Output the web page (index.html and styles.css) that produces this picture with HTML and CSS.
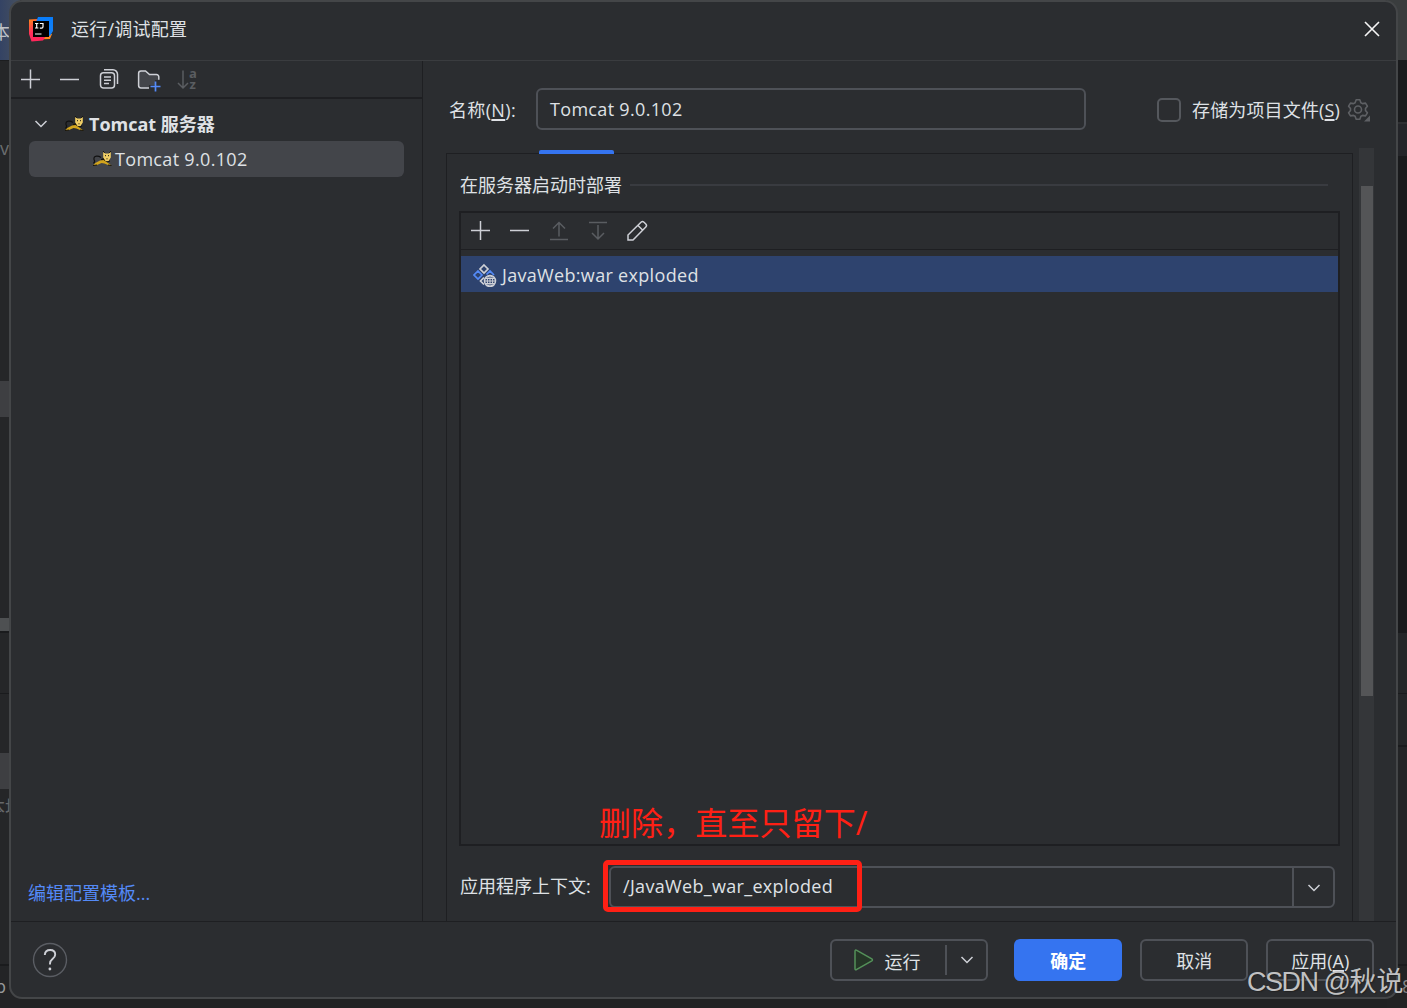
FILE: index.html
```html
<!DOCTYPE html>
<html lang="zh-CN">
<head>
<meta charset="utf-8">
<title>运行/调试配置</title>
<link rel="stylesheet" href="styles.css">
</head>
<body>
<div class="ide ide-left">
  <div class="seg l1">本</div><div class="seg l2">v</div><div class="seg l3"></div><div class="seg l4"></div><div class="seg l5"></div><div class="seg l6"></div><div class="seg l6b"></div><div class="seg l7"></div><div class="seg l8">本地</div><div class="seg l9">p</div>
</div>
<div class="ide ide-right">
  <div class="seg r1"></div><div class="seg r2"></div><div class="seg r3"></div><div class="seg r4"></div><div class="seg r5"></div><div class="seg r6"></div><div class="seg r7"></div><div class="seg r8">8</div>
</div>
<main class="dialog">
  <header class="titlebar">
    <svg class="logo" width="26" height="26" viewBox="0 0 26 26">
      <defs>
        <linearGradient id="g1" x1="0" y1="0" x2=".5" y2="1"><stop offset="0" stop-color="#ff8a18"/><stop offset=".55" stop-color="#ff2d5b"/><stop offset="1" stop-color="#ff2459"/></linearGradient>
        <linearGradient id="g2" x1="0" y1="0" x2="0" y2="1"><stop offset="0" stop-color="#087cfa"/><stop offset="1" stop-color="#1682f5"/></linearGradient>
      </defs>
      <path d="M15 18h9l-2 5-7 .2z" fill="#ff8618"/>
      <path d="M1 3.500 10 3v17h8l-3 4.500-11.500 1L1 18z" fill="url(#g1)"/>
      <path d="M10 1h15v14l-3 5-5-1V6H8z" fill="url(#g2)"/>
      <rect x="5" y="5" width="16" height="16" fill="#000"/>
      <path d="M7 7.500h3.400M8.700 7.500v4.500M7 12h3.400M11.800 7.500H15v3.300q0 1.300-1.300 1.300h-1.900M7 18h6.500" fill="none" stroke="#fff" stroke-width="1.200"/>
    </svg>
    <h1>运行/调试配置</h1>
    <svg class="close" width="18" height="18" viewBox="0 0 18 18"><path d="M2 2l14 14M16 2L2 16" stroke="#f5f5f5" stroke-width="1.600"/></svg>
  </header>
  <div class="content">
    <aside>
      <div class="toolbar">
        <svg width="24" height="24" viewBox="0 0 24 24"><path d="M12.500 2.500v19M3 12.500h19" class="ic"/></svg>
        <svg width="24" height="24" viewBox="0 0 24 24"><path d="M3 12.500h19" class="ic"/></svg>
        <svg width="24" height="24" viewBox="0 0 24 24"><path d="M7 2.800h9a4.500 4.500 0 0 1 4.500 4.500V17M6.500 5.700h8a3 3 0 0 1 3 3v9.300a3 3 0 0 1-3 3h-8a3 3 0 0 1-3-3V8.700a3 3 0 0 1 3-3zM7 10h7M7 13.300h7M7 16.500h5" class="ic"/></svg>
        <svg width="25" height="24" viewBox="0 0 25 24"><path d="M13 21H5a2.400 2.400 0 0 1-2.400-2.400V6.400A2.400 2.400 0 0 1 5 4h4.500l4 3.500h7a2.300 2.300 0 0 1 2.300 2.300V13H19v5h-6z" fill="#43454a"/><path d="M13 21H5a2.400 2.400 0 0 1-2.400-2.400V6.400A2.400 2.400 0 0 1 5 4h4.500l4 3.500h7a2.300 2.300 0 0 1 2.300 2.300v3" class="ic"/><path d="M19.500 14.500v10M14.500 19.500h10" stroke="#548af7" stroke-width="1.700"/></svg>
        <svg width="24" height="24" viewBox="0 0 24 24"><path d="M7 3.500V21M2 16l5 5 5-5" class="ic off"/><text x="13" y="11" class="az">a</text><text x="13.500" y="22" class="az">z</text></svg>
      </div>
      <div class="tree">
        <div class="node parent">
          <svg width="14" height="10" viewBox="0 0 14 10"><path d="M1.500 2l5.500 5.500L12.500 2" class="ic"/></svg>
          <svg class="cat" width="22" height="18" viewBox="0 0 22 18"><use href="#tomcat"/></svg>
          <b>Tomcat 服务器</b>
        </div>
        <div class="node child">
          <svg class="cat" width="22" height="18" viewBox="0 0 22 18"><g id="tomcat"><path d="M2.500 13.500Q4.500 11.500 3 9.500 Q2.500 6.500 5.500 6.200 Q8 6 10 7.500" fill="none" stroke="#111" stroke-width="1.200"/><path d="M10 9.500 13 8.500l3 2-2 1.500zM15 12.500l4-1.500" fill="#17140a" stroke="#17140a"/><path d="M2 15.500 Q5 12 9 10.500 L12.500 10 Q16 12 20.500 15.500 L17 15 Q13 13 10.500 13 L6 15z" fill="#d2a41c"/><path d="M2 15.500l4-.5M20.500 15.500l-3.500-.5" stroke="#17140a" stroke-width="1"/><path d="M12.200 1.500l2 2h3.600l2-2v6l-2.300 3.500h-3L12.200 7.500z" fill="#f0ce65"/><path d="M12 1l1.700 2M20 1l-1.700 2M14 5.700h1M17 5.700h1M15.500 8.800h1" stroke="#111" stroke-width="1"/></g></svg>
          <span class="latin">Tomcat 9.0.102</span>
        </div>
      </div>
      <a class="link">编辑配置模板...</a>
    </aside>
    <section class="editor">
      <div class="namerow">
        <label class="nl">名称(<u>N</u>):</label>
        <div class="field"><span class="latin">Tomcat 9.0.102</span></div>
        <i class="check"></i>
        <label class="store">存储为项目文件(<u>S</u>)</label>
        <svg class="gear" width="24" height="24" viewBox="0 0 24 24"><g fill="none" stroke="#5e6064" stroke-width="1.600"><circle cx="11" cy="11.500" r="3.500"/><path d="M9.200 1.800h3.600l1.100 2.900 1.600.9 3-.5 1.900 3.100-1.900 2.400v1.800l1.900 2.400-1.900 3.100-3-.5-1.600.9-1.100 2.900H9.200l-1.100-2.900-1.600-.9-3 .5-1.900-3.100 1.900-2.400v-1.800L1.600 8.200l1.900-3.100 3 .5 1.600-.9z" stroke-linejoin="round"/></g><path d="M23 17.500v6h-6z" fill="#5e6064"/></svg>
      </div>
      <div class="lower">
        <div class="panel">
          <i class="tabmark"></i>
          <div class="heading"><span>在服务器启动时部署</span><i></i></div>
          <div class="list">
            <div class="toolbar">
              <svg width="24" height="24" viewBox="0 0 24 24"><path d="M12.500 2v19M3 11.500h19" class="ic"/></svg>
              <svg width="24" height="24" viewBox="0 0 24 24"><path d="M3 11.500h19" class="ic"/></svg>
              <svg width="24" height="24" viewBox="0 0 24 24"><path d="M12 17.500V4M6 9.500l6-6 6 6M3 20.500h18" class="ic off"/></svg>
              <svg width="24" height="24" viewBox="0 0 24 24"><path d="M12 6V19.500M6 14l6 6 6-6M3 3.500h18" class="ic off"/></svg>
              <svg width="24" height="24" viewBox="0 0 24 24"><path d="M3 21v-5L16 3.200q1.500-1.500 3 0l1.800 1.800q1.500 1.500 0 3L8 21zM13 6.500l4.800 4.800" class="ic"/></svg>
            </div>
            <div class="item">
              <svg width="24" height="24" viewBox="0 0 24 24" fill="none" stroke-width="1.700"><path d="M11 2l4 4-4 4-4-4z" stroke="#ced0d6"/><path d="M5 8l4 4-4 4-4-4zM13.500 11.500l3.500-3.500 4 4" stroke="#548af7"/><path d="M11 14.500l-3.500 3.500 3.500 3.500" stroke="#ced0d6"/><circle cx="17" cy="18" r="5.500" stroke="#ced0d6" stroke-width="1.500"/><path d="M11.500 18h11M17 12.500v11M12.500 15.500h9M12.500 20.500h9" stroke="#ced0d6" stroke-width="1"/><ellipse cx="17" cy="18" rx="2.700" ry="5.500" stroke="#ced0d6" stroke-width="1"/></svg>
              <span class="latin">JavaWeb:war exploded</span>
            </div>
          </div>
          <div class="context">
            <label>应用程序上下文:</label>
            <div class="combo"><span class="latin">/JavaWeb_war_exploded</span><b><svg width="14" height="10" viewBox="0 0 14 10"><path d="M1.500 2l5.500 5.500L12.500 2" class="ic"/></svg></b></div>
          </div>
        </div>
        <div class="track"><i></i></div>
      </div>
    </section>
  </div>
  <footer>
    <svg class="help" width="36" height="36" viewBox="0 0 36 36"><circle cx="18" cy="18" r="16.500" fill="none" stroke="#5a5d63" stroke-width="1.400"/><path d="M12.800 13q.3-5 5.400-5 5 0 5 4.600 0 2.400-2.700 4.500-2.500 1.900-2.500 4.400v1" fill="none" stroke="#ced0d6" stroke-width="1.900"/><circle cx="17.900" cy="27" r="1.400" fill="#ced0d6"/></svg>
    <button class="run"><svg width="22" height="24" viewBox="0 0 22 24"><path d="M2 3.500q0-2 1.800-1.100l15 8.500q1.300 1 0 2l-15 8.500Q2 22.500 2 20.500z" fill="#253627" stroke="#549159" stroke-width="1.500"/></svg><span>运行</span><i></i><svg width="14" height="10" viewBox="0 0 14 10"><path d="M1.500 2l5.500 5.500L12.500 2" class="ic"/></svg></button>
    <button class="ok">确定</button>
    <button class="plain">取消</button>
    <button class="plain">应用(<u>A</u>)</button>
  </footer>
</main>
<div class="note">删除，直至只留下/</div>
<div class="marker"></div>
<div class="watermark"><span>CSDN @</span>秋说</div>
</body>
</html>
```
FILE: styles.css
```css
* { box-sizing: border-box; }
body {
  margin: 0; width: 1407px; height: 1008px; overflow: hidden; position: relative;
  background: #212223; color: #dfe1e5;
  font: 18px/24px "Open Sans", "Noto Sans CJK SC", sans-serif;
}
svg, i { display: block; flex: none; }
h1 { margin: 0; font-size: 18px; font-weight: 400; letter-spacing: .25px; }
u { text-decoration-thickness: 2px; text-underline-offset: 2px; }
span, label, b, h1, a { white-space: nowrap; }
.latin { letter-spacing: .32px; }
.ic { fill: none; stroke: #ced0d6; stroke-width: 1.5; }
.off { stroke: #5a5d61; }
.az { font: bold 13px "Open Sans", sans-serif; fill: #5a5d61; }

/* edges of the IDE window behind the dialog */
.ide { position: absolute; top: 0; height: 1008px; overflow: hidden; display: flex; flex-direction: column; }
.ide-left { left: 0; width: 20px; background: #252628; }
.ide-right { right: 0; width: 20px; }
.seg { flex: none; overflow: hidden; white-space: nowrap; }
.l1 { height: 61px; background: linear-gradient(90deg, #344364, #46505f); border-bottom: 1px solid #1c1d1f; padding-top: 20px; text-indent: -8px; color: #bfc2c7; }
.l2 { height: 320px; padding-top: 75px; color: #6b6e70; }
.l3 { height: 36px; background: #3e3f42; }
.l4 { height: 201px; }
.l5 { height: 13px; background: #4e5052; }
.l6 { height: 63px; border-top: 2px solid #1a1b1d; border-bottom: 1px solid #1a1b1d; }
.l6b { height: 59px; }
.l7 { height: 36px; background: #3e3f42; }
.l8 { height: 177px; border-bottom: 2px solid #1a1b1d; padding-top: 6px; text-indent: -13px; color: #66686a; }
.l9 { flex: 1; padding-top: 8px; text-indent: -5px; color: #96989a; background: #232426; }
.r1 { height: 60px; background: #3a3d3e; }
.r2 { height: 62px; background: #1a1b1d; }
.r3 { height: 34px; background: #242529; border-top: 2px solid #2e2f32; }
.r4 { height: 477px; background: #191a1c; }
.r5 { height: 61px; background: #242628; border-bottom: 1px solid #1a1b1d; }
.r6 { height: 53px; background: #242628; border-bottom: 2px solid #1a1b1d; }
.r7 { height: 219px; background: #232426; border-bottom: 2px solid #1a1b1d; }
.r8 { flex: 1; background: #222324; color: #85888c; padding: 8px 0 0 15px; }

.dialog {
  position: relative; width: 1389px; height: 999px; margin-left: 9px;
  border: 2px solid #444648; border-radius: 13px; background: #2b2d30;
  display: flex; flex-direction: column; overflow: hidden;
}
.titlebar { flex: none; height: 59px; display: flex; align-items: center; padding: 0 15px 4px 17px; border-bottom: 1px solid #3a3c3f; }
.titlebar h1 { margin-left: 17px; }
.titlebar .close { margin-left: auto; }
.content { flex: none; height: 861px; display: flex; border-bottom: 1px solid #1e1f22; }
aside { width: 412px; border-right: 1px solid #1e1f22; display: flex; flex-direction: column; flex: none; }
.toolbar { display: flex; gap: 15.3px; align-items: center; flex: none; }
.toolbar svg { overflow: visible; }
aside .toolbar { height: 38px; padding-left: 7px; border-bottom: 2px solid #1e1f22; }
.tree { padding: 6px 18px 0; }
.node { height: 36px; display: flex; align-items: center; }
.parent { padding: 1px 0 0 5px; }
.parent .cat { margin: 0 4px 0 15px; }
.child { padding-left: 62px; border-radius: 6px; background: #43454a; gap: 2px; }
.link { margin: auto auto 16px 17px; color: #548af7; }

.editor { flex: 1; min-width: 0; display: flex; flex-direction: column; }
.namerow { flex: none; height: 87px; padding-top: 27px; display: flex; }
.nl { width: 87px; margin: 10px 0 0 26px; letter-spacing: .35px; }
.field { width: 550px; height: 42px; border: 2px solid #4e5157; border-radius: 6px; padding: 7px 12px; margin-right: 1px; }
.check { width: 24px; height: 24px; margin: 10px 11px 0 70px; border: 2px solid #55585d; border-radius: 5px; }
.store { margin-top: 10px; width: 149px; letter-spacing: .15px; }
.gear { margin: 10px 0 0 6px; }
.lower { flex: 1; display: flex; }
.panel { position: relative; width: 907px; margin: 5px 0 0 23px; border: 1px solid #1e1f22; border-bottom: 0; padding: 19px 12px 0; display: flex; flex-direction: column; }
.tabmark { position: absolute; left: 92px; top: -4px; width: 75px; height: 4px; background: #3574f0; border-radius: 2px 2px 0 0; }
.heading { display: flex; align-items: center; height: 24px; gap: 8px; padding-left: 1px; }
.heading i { width: 698px; height: 2px; background: #393b40; }
.list { width: 881px; height: 635px; margin-top: 14px; border: 2px solid #1e1f22; }
.list .toolbar { height: 37px; padding: 0 0 0 7px; border-bottom: 1px solid #1e1f22; }
.item { height: 36px; margin-top: 6px; padding: 1px 0 0 12px; background: #2e436e; display: flex; align-items: center; gap: 5px; }
.context { display: flex; margin-top: 20px; height: 42px; align-items: center; padding-left: 1px; }
.context label { width: 149px; padding-bottom: 2px; }
.combo { width: 726px; height: 42px; border: 2px solid #4e5157; border-radius: 6px; display: flex; padding-left: 12px; line-height: 36px; }
.combo b { width: 41px; margin-left: auto; border-left: 2px solid #4e5157; display: grid; place-items: center; padding-top: 1px; }
.track { width: 15px; margin-left: 6px; padding: 38px 1px 0 2px; background: #343639; }
.track i { height: 510px; background: #545557; }

footer { flex: 1; display: flex; padding: 17px 22px 0 21px; }
.help { margin-top: 3px; }
button { height: 42px; border: 2px solid #4e5157; border-radius: 6px; background: none; color: inherit; font: inherit; padding: 2px 0 0 1px; margin-left: 17.500px; width: 108.500px; }
.run { display: flex; width: 158px; margin-left: auto; align-items: center; padding: 0 0 0 21px; }
.run span { margin: 3px 0 0 10px; }
.run i { width: 2px; height: 30px; margin: 0 13px 0 24px; background: #4e5157; }
.ok { border: 0; background: #3574f0; color: #fff; font-weight: 700; margin-left: 26px; }

.note { position: absolute; left: 599px; top: 799px; font: 32px/48px "Open Sans", "Noto Sans CJK SC", sans-serif; color: #ff2015; white-space: nowrap; letter-spacing: .1px; }
.marker { position: absolute; left: 603px; top: 860px; width: 259px; height: 52px; border: 5px solid #ff2015; border-radius: 5px; }
.watermark { position: absolute; left: 1247px; top: 964px; font: 27px/36px "Liberation Sans", "Noto Sans CJK SC", sans-serif; color: #c0c1c2; white-space: nowrap; text-shadow: 1px 1px 1px #222; }
.watermark span { letter-spacing: -1.5px; }
```
